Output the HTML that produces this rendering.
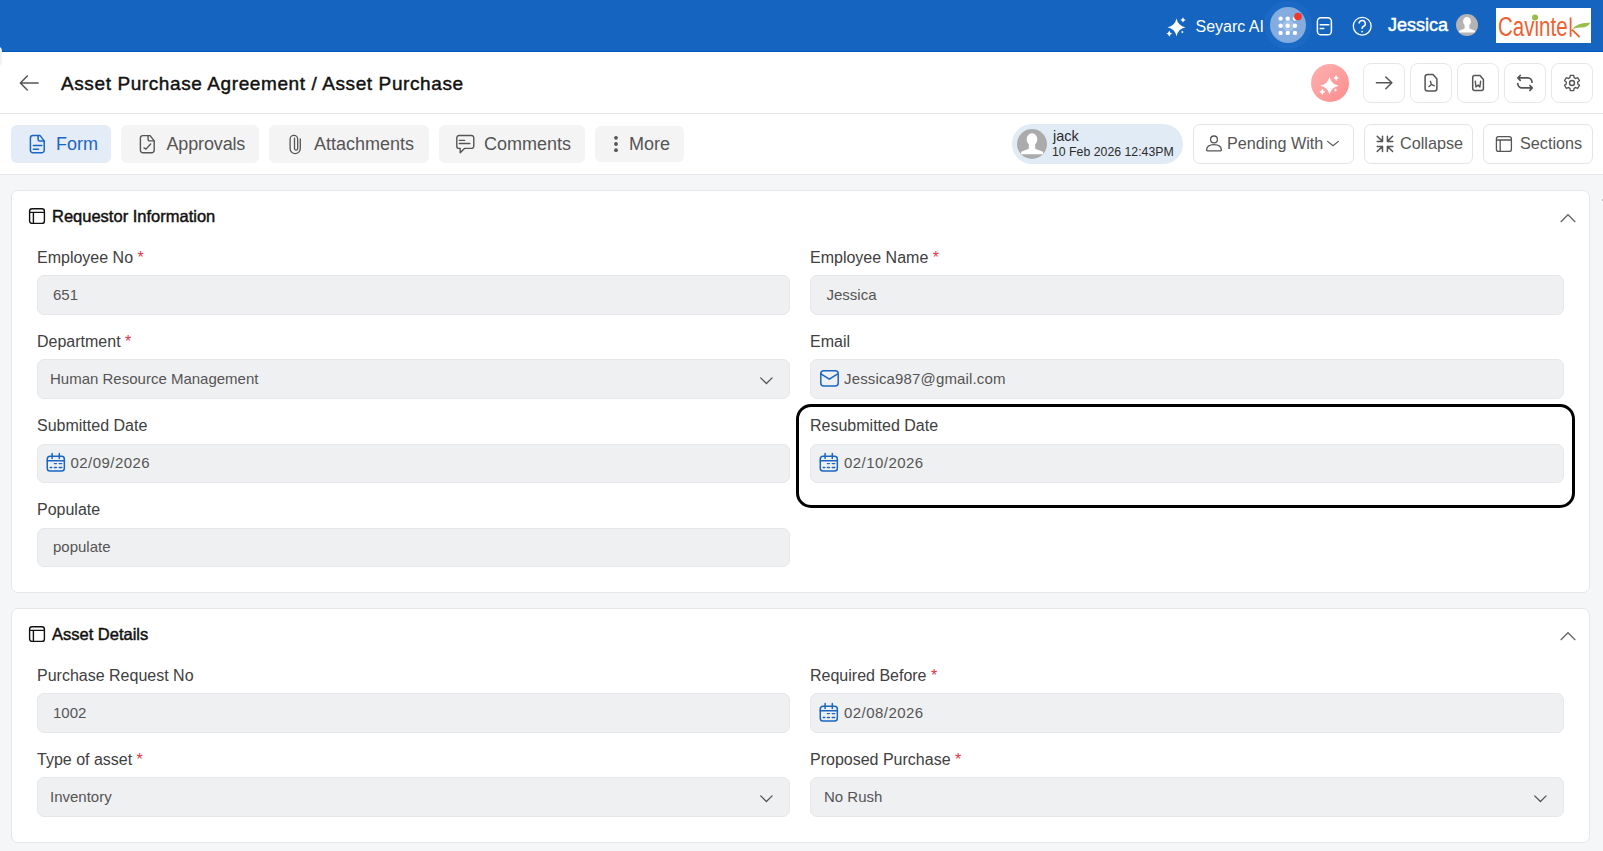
<!DOCTYPE html>
<html><head><meta charset="utf-8">
<style>
*{box-sizing:border-box;margin:0;padding:0}
html,body{width:1603px;height:851px;overflow:hidden;font-family:"Liberation Sans",sans-serif;background:#f5f6f8;position:relative}
.abs{position:absolute}
svg{position:absolute;overflow:visible}
#hdr{left:0;top:0;width:1603px;height:52px;background:#1565c0;border-bottom:1px solid #0357c2}
#titlebar{left:0;top:52px;width:1603px;height:62px;background:#fff;border-bottom:1px solid #e4e6e9}
#tabbar{left:0;top:114px;width:1603px;height:61px;background:#fff;border-bottom:1px solid #e4e6e9}
.t{position:absolute;white-space:nowrap;line-height:1}
.tab{position:absolute;top:125px;height:38px;border-radius:6px;background:#f4f4f5}
.tab.act{background:#e3ecf7}
.tabt{font-size:18px;color:#555;top:135.3px}
.obtn{position:absolute;top:124px;height:39.5px;border:1px solid #e3e4e6;border-radius:7px;background:#fff}
.obt{font-size:16.2px;color:#555;top:134.5px}
.ibtn{position:absolute;top:63px;width:41.5px;height:39.5px;border:1px solid #e6e7e9;border-radius:8px;background:#fff}
.card{position:absolute;left:11px;width:1579px;background:#fff;border:1px solid #e5e7ea;border-radius:7px}
.sech{font-size:16.5px;color:#111;-webkit-text-stroke:0.45px #111;letter-spacing:0}
.lbl{font-size:16px;color:#404040}
.req{color:#e0364a}
.inp{position:absolute;height:39.5px;background:#eff0f2;border:1px solid #e6e7ea;border-radius:7px}
.val{font-size:15px;color:#555;margin-top:-1px}
</style></head><body>
<div id="hdr" class="abs"></div>
<div id="titlebar" class="abs"></div>
<div id="tabbar" class="abs"></div>

<!-- ===== header right ===== -->
<svg style="left:1160px;top:12px" width="30" height="30" viewBox="0 0 30 30">
<path d="M16.5 6.4 Q18 13.6 25.5 15.3 Q18 17 16.5 24.3 Q15 17 7.5 15.3 Q15 13.6 16.5 6.4Z" fill="#fff"/>
<path d="M23 5.3 Q23.5 7.4 25.6 7.9 Q23.5 8.4 23 10.5 Q22.5 8.4 20.4 7.9 Q22.5 7.4 23 5.3Z" fill="#fff"/>
<path d="M9.3 18.4 Q9.9 21 12.5 21.6 Q9.9 22.2 9.3 24.8 Q8.7 22.2 6.1 21.6 Q8.7 21 9.3 18.4Z" fill="#fff"/>
<path d="M22.3 18.6 Q22.5 19.9 23.8 20.1 Q22.5 20.3 22.3 21.6 Q22.1 20.3 20.8 20.1 Q22.1 19.9 22.3 18.6Z" fill="#fff"/>
</svg>
<div class="t" style="left:1195.5px;top:19px;font-size:16px;color:#fff">Seyarc AI</div>
<div class="abs" style="left:1264px;top:1px;width:48px;height:48px;border-radius:50%;background:#1a6ac5"></div>
<div class="abs" style="left:1270px;top:7px;width:36px;height:36px;border-radius:50%;background:#84acdf"></div>
<svg style="left:1262px;top:0px" width="50" height="50" viewBox="0 0 50 50" fill="#fff">
<circle cx="26.3" cy="25.7" r="6" fill="#a2bfe6"/>
<circle cx="18.6" cy="18.6" r="2.2"/><circle cx="25.7" cy="18.6" r="2.2"/><circle cx="32.9" cy="18.6" r="2.2"/>
<circle cx="18.6" cy="25.7" r="2.2"/><circle cx="25.7" cy="25.7" r="2.2"/><circle cx="32.9" cy="25.7" r="2.2"/>
<circle cx="18.6" cy="32.9" r="2.2"/><circle cx="25.7" cy="32.9" r="2.2"/><circle cx="32.9" cy="32.9" r="2.2"/>
<circle cx="36" cy="16.5" r="3.8" fill="#f2362a"/>
</svg>
<svg style="left:1310px;top:12px" width="28" height="28" viewBox="0 0 28 28" fill="none" stroke="#fff" stroke-width="1.5">
<rect x="7.4" y="5.8" width="14" height="17" rx="3.6"/><path d="M10.2 12.8h8.6M10.2 16.4h3.6" stroke-linecap="round"/>
</svg>
<svg style="left:1348px;top:12px" width="28" height="28" viewBox="0 0 28 28" fill="none" stroke="#fff" stroke-width="1.3">
<circle cx="14.2" cy="14.2" r="8.9"/>
<path d="M11.1 11.6a3.1 3.1 0 1 1 4.2 2.9c-.8.4-1.2.9-1.2 1.7v.9" stroke-width="1.5"/>
<circle cx="14.1" cy="19.6" r="0.9" fill="#fff" stroke="none"/>
</svg>
<div class="t" id="jes" style="left:1388px;top:16px;font-size:18px;color:#fff;-webkit-text-stroke:0.45px #fff">Jessica</div>
<svg style="left:1456px;top:14px" width="22" height="22" viewBox="0 0 30 30">
<circle cx="15" cy="15" r="15" fill="#b3b3b3"/>
<g fill="#fff">
<ellipse cx="15" cy="10.2" rx="5.3" ry="6"/>
<rect x="11.8" y="13" width="6.4" height="8"/>
<path d="M4 25.2 L4.3 22.8 Q9 21 12 19.8 H18 Q21 21 25.9 22.8 L26.2 25.2 Z"/>
</g>
</svg>
<div class="abs" style="left:1496px;top:8px;width:95px;height:35px;background:#fff"></div>
<div class="t" style="left:1497.8px;top:13.9px;font-size:27px;color:#ec6230;transform:scaleX(0.76);transform-origin:0 0">Cavinte</div>
<svg style="left:1496px;top:8px" width="95" height="35" viewBox="0 0 95 35">
<circle cx="39" cy="9.4" r="3" fill="#98bd48"/>
<path d="M74.6 9.4V28.8M76 21.6L83.5 29" stroke="#ec6230" stroke-width="1.8" fill="none"/>
<path d="M76.5 21.5 Q81 14 94.5 14.8 Q91.5 19.5 86 19.5 Q80 19 76.5 21.5Z" fill="#9bbe4a"/>
</svg>

<!-- ===== title bar ===== -->
<svg style="left:15px;top:69px" width="28" height="28" viewBox="0 0 28 28" fill="none" stroke="#555" stroke-width="1.5" stroke-linecap="round" stroke-linejoin="round">
<path d="M23.2 14H5.5M12.3 7L5.3 14L12.3 21"/>
</svg>
<div class="t" id="ttl" style="left:61px;top:73.5px;font-size:19px;color:#111;-webkit-text-stroke:0.45px #111;letter-spacing:0.6px">Asset Purchase Agreement / Asset Purchase</div>

<div class="abs" style="left:1311px;top:64px;width:38px;height:38px;border-radius:50%;background:linear-gradient(135deg,#ffb1b1 0%,#fb8d8d 100%)"></div>
<svg style="left:1311px;top:64px" width="38" height="38" viewBox="0 0 38 38" fill="#fff">
<path d="M18.5 12.7 Q20 19.9 27.7 21.7 Q20 23.5 18.5 30.5 Q17 23.5 9.3 21.7 Q17 19.9 18.5 12.7Z"/>
<path d="M25.1 10.9 Q25.7 13.3 28 13.9 Q25.7 14.5 25.1 16.9 Q24.5 14.5 22.2 13.9 Q24.5 13.3 25.1 10.9Z"/>
<path d="M11.3 24.5 Q12 27 14.3 27.7 Q12 28.4 11.3 30.9 Q10.6 28.4 8.3 27.7 Q10.6 27 11.3 24.5Z"/>
<path d="M24.4 24.2 Q24.8 25.6 26.2 26 Q24.8 26.4 24.4 27.8 Q24 26.4 22.6 26 Q24 25.6 24.4 24.2Z"/>
</svg>

<div class="ibtn" style="left:1363px"></div>
<div class="ibtn" style="left:1410px"></div>
<div class="ibtn" style="left:1457px"></div>
<div class="ibtn" style="left:1504px"></div>
<div class="ibtn" style="left:1551px"></div>
<svg style="left:1370px;top:69px" width="28" height="28" viewBox="0 0 28 28" fill="none" stroke="#555" stroke-width="1.5" stroke-linecap="round" stroke-linejoin="round">
<path d="M6.4 13.8H21.9M15.8 8L21.9 13.8L15.8 19.7"/>
</svg>
<svg style="left:1417px;top:69px" width="28" height="28" viewBox="0 0 28 28" fill="none" stroke="#555" stroke-width="1.5" stroke-linecap="round" stroke-linejoin="round">
<path d="M16.1 5.6H10.6A2.5 2.5 0 0 0 8.1 8.1V19.5A2.5 2.5 0 0 0 10.6 22H17.4A2.5 2.5 0 0 0 19.9 19.5V9.9Z"/>
<path d="M14.4 15.4L13.4 12.3M14.4 15.4L12 17.6M14.4 15.4L17.4 16.8" stroke-width="1.4"/>
</svg>
<svg style="left:1464px;top:69px" width="28" height="28" viewBox="0 0 28 28" fill="none" stroke="#555" stroke-width="1.5" stroke-linecap="round" stroke-linejoin="round">
<path d="M16 6.6H10.7A2 2 0 0 0 8.7 8.6V19.4A2 2 0 0 0 10.7 21.4H17.4A2 2 0 0 0 19.4 19.4V10.4Z"/>
<path d="M11.3 12.3L12 18L14.2 16L15.9 18L16.6 12.3" stroke-width="1.4"/>
</svg>
<svg style="left:1511px;top:69px" width="28" height="28" viewBox="0 0 28 28" fill="none" stroke="#555" stroke-width="1.7" stroke-linecap="round" stroke-linejoin="round">
<path d="M7 8.9H16.8A4.3 4.3 0 0 1 21 13.2M9.2 6.5L6.9 8.9L9.2 11.3"/>
<path d="M6.8 14.6A4.3 4.3 0 0 0 11 18.9H21.2M18.9 16.5L21.2 18.9L18.9 21.3"/>
</svg>
<svg style="left:1558px;top:69px" width="28" height="28" viewBox="0 0 28 28" fill="none" stroke="#555" stroke-width="1.35" stroke-linejoin="round">
<path d="M11.98 8.46L12.31 6.38L15.69 6.38L16.02 8.46A3.20 3.20 0 0 0 17.79 9.48L19.75 8.73L21.44 11.65L19.81 12.98A3.20 3.20 0 0 0 19.81 15.02L21.44 16.35L19.75 19.27L17.79 18.52A3.20 3.20 0 0 0 16.02 19.54L15.69 21.62L12.31 21.62L11.98 19.54A3.20 3.20 0 0 0 10.21 18.52L8.25 19.27L6.56 16.35L8.19 15.02A3.20 3.20 0 0 0 8.19 12.98L6.56 11.65L8.25 8.73L10.21 9.48A3.20 3.20 0 0 0 11.98 8.46Z"/>
<circle cx="14" cy="14" r="2.5"/>
</svg>

<!-- ===== tabs ===== -->
<div class="tab act" style="left:11px;width:100px"></div>
<div class="tab" style="left:121px;width:138px"></div>
<div class="tab" style="left:269px;width:160px"></div>
<div class="tab" style="left:439px;width:146px"></div>
<div class="tab" style="left:595px;width:89px;top:126px;height:36px"></div>

<svg style="left:24px;top:130px" width="28" height="28" viewBox="0 0 28 28" fill="none" stroke="#1a66c2" stroke-width="1.5" stroke-linecap="round" stroke-linejoin="round">
<path d="M16.1 5.6H8.9A2.5 2.5 0 0 0 6.4 8.1V20.2A2.5 2.5 0 0 0 8.9 22.7H17.7A2.5 2.5 0 0 0 20.2 20.2V10.9Z"/>
<path d="M14.1 5.6V9.4A1.5 1.5 0 0 0 15.6 10.9H20.2M9.4 15.5H17.8M9.4 19.2H14.5"/>
</svg>
<div class="t tabt" style="left:56px;color:#1a66c2">Form</div>
<svg style="left:134px;top:130px" width="28" height="28" viewBox="0 0 28 28" fill="none" stroke="#555" stroke-width="1.4" stroke-linecap="round" stroke-linejoin="round">
<path d="M16.1 5.6H8.9A2.5 2.5 0 0 0 6.4 8.1V20.2A2.5 2.5 0 0 0 8.9 22.7H17.7A2.5 2.5 0 0 0 20.2 20.2V10.9Z"/>
<path d="M14.1 5.6V9.4A1.5 1.5 0 0 0 15.6 10.9H20.2M10 17.9L12 19.1L16.6 14"/>
</svg>
<div class="t tabt" style="left:166.5px;letter-spacing:-0.15px">Approvals</div>
<svg style="left:280px;top:128px" width="40" height="32" viewBox="0 0 40 32" fill="none" stroke="#555" stroke-width="1.3" stroke-linecap="round">
<path d="M20.3 11V20.5A5.1 5.1 0 0 1 10.1 20.5V11.2A3.8 3.8 0 0 1 17.7 11.2V20.5A1.6 1.6 0 0 1 14.5 20.5V10.2"/>
</svg>
<div class="t tabt" style="left:314px">Attachments</div>
<svg style="left:450px;top:128px" width="40" height="32" viewBox="0 0 40 32" fill="none" stroke="#555" stroke-width="1.4" stroke-linecap="round" stroke-linejoin="round">
<path d="M9 7.5H21.6A2.2 2.2 0 0 1 23.8 9.7V18.2A2.2 2.2 0 0 1 21.6 20.4H14.5L10.2 24.8V20.4H9A2.2 2.2 0 0 1 6.8 18.2V9.7A2.2 2.2 0 0 1 9 7.5Z"/>
<path d="M9.3 12.4H14.6M9.3 15.5H19.8"/>
</svg>
<div class="t tabt" style="left:484px">Comments</div>
<svg style="left:600px;top:128px" width="40" height="32" viewBox="0 0 40 32" fill="#555">
<circle cx="16" cy="9.8" r="1.9"/><circle cx="16" cy="16" r="1.9"/><circle cx="16" cy="22.2" r="1.9"/>
</svg>
<div class="t tabt" style="left:629px">More</div>

<!-- right side of tab bar -->
<div class="abs" style="left:1012px;top:124px;width:171px;height:40px;border-radius:20px;background:#e1ebf6"></div>
<svg style="left:1017px;top:129px" width="30" height="30" viewBox="0 0 30 30">
<circle cx="15" cy="15" r="15" fill="#ababab"/>
<g fill="#fff">
<ellipse cx="15" cy="10.2" rx="5.3" ry="6"/>
<rect x="11.8" y="13" width="6.4" height="8"/>
<path d="M4 25.2 L4.3 22.8 Q9 21 12 19.8 H18 Q21 21 25.9 22.8 L26.2 25.2 Z"/>
</g>
</svg>
<div class="t" style="left:1053px;top:129px;font-size:14.5px;color:#2b2b2b">jack</div>
<div class="t" style="left:1052px;top:145.5px;font-size:12.3px;color:#2b2b2b">10 Feb 2026 12:43PM</div>

<div class="obtn" style="left:1193px;width:161px"></div>
<svg style="left:1200px;top:130px" width="28" height="28" viewBox="0 0 28 28" fill="none" stroke="#555" stroke-width="1.3" stroke-linejoin="round">
<circle cx="14" cy="9.4" r="3.4"/>
<path d="M7.4 20.8H20.6A0.8 0.8 0 0 0 21.4 20Q21.2 14.6 14 14.6Q6.8 14.6 6.6 20A0.8 0.8 0 0 0 7.4 20.8Z"/>
</svg>
<div class="t obt" style="left:1227px">Pending With</div>
<svg style="left:1322px;top:135px" width="20" height="16" viewBox="0 0 20 16" fill="none" stroke="#555" stroke-width="1.2" stroke-linecap="round">
<path d="M5.6 6.4L11 10.8L16.4 6.4"/>
</svg>

<div class="obtn" style="left:1364px;width:108.5px"></div>
<svg style="left:1372px;top:130px" width="28" height="28" viewBox="0 0 28 28" fill="none" stroke="#555" stroke-width="1.5" stroke-linecap="round" stroke-linejoin="round">
<path d="M5.2 6.2L10.5 11.4M10.5 6.2V11.4H5.2M20.6 6.2L15.4 11.4M15.4 6.2V11.4H20.8M5.2 21.5L10.5 16.4M5.2 16.4H10.5V21.5M20.6 21.5L15.4 16.4M20.8 16.4H15.4V21.5"/>
</svg>
<div class="t obt" style="left:1400px">Collapse</div>

<div class="obtn" style="left:1483px;width:109.5px"></div>
<svg style="left:1490px;top:130px" width="28" height="28" viewBox="0 0 28 28" fill="none" stroke="#555" stroke-width="1.3">
<rect x="6.4" y="6.6" width="15" height="14.8" rx="2.2"/><path d="M6.4 10H21.4M10.2 10V21.4"/>
</svg>
<div class="t obt" style="left:1520px">Sections</div>

<!-- ===== card 1 ===== -->
<div class="card" style="top:190px;height:402.5px"></div>
<svg style="left:23px;top:202px" width="28" height="28" viewBox="0 0 28 28" fill="none" stroke="#111" stroke-width="1.4">
<rect x="6.6" y="6.7" width="14.8" height="14.7" rx="2.5"/><path d="M6.6 10.4H21.4M10.4 10.4V21.4"/>
</svg>
<div class="t sech" style="left:52px;top:208px">Requestor Information</div>
<svg style="left:1554px;top:204px" width="28" height="28" viewBox="0 0 28 28" fill="none" stroke="#666" stroke-width="1.3" stroke-linecap="square">
<path d="M7.2 17.5L14 10.7L20.8 17.5"/>
</svg>

<div class="t lbl" style="left:37px;top:250px">Employee No <span class="req">*</span></div>
<div class="inp" style="left:37px;top:275px;width:753px"></div>
<div class="t val" style="left:53px;top:288px">651</div>
<div class="t lbl" style="left:810px;top:250px">Employee Name <span class="req">*</span></div>
<div class="inp" style="left:810px;top:275px;width:754px"></div>
<div class="t val" style="left:826.5px;top:288px">Jessica</div>

<div class="t lbl" style="left:37px;top:334px">Department <span class="req">*</span></div>
<div class="inp" style="left:37px;top:359px;width:753px"></div>
<div class="t val" style="left:50px;top:372px">Human Resource Management</div>
<svg style="left:752px;top:366px" width="28" height="28" viewBox="0 0 28 28" fill="none" stroke="#555" stroke-width="1.3" stroke-linecap="round">
<path d="M8.7 11.9L14.4 17.5L20.1 11.9"/>
</svg>
<div class="t lbl" style="left:810px;top:334px">Email</div>
<div class="inp" style="left:810px;top:359px;width:754px"></div>
<svg style="left:815px;top:364px" width="28" height="28" viewBox="0 0 28 28" fill="none" stroke="#1a66c2" stroke-width="1.5" stroke-linejoin="round">
<rect x="5.8" y="6.8" width="17.4" height="15.2" rx="3"/><path d="M5.9 9.8L14.3 15.2L22.8 9.8"/>
</svg>
<div class="t val" style="left:844px;top:372px;letter-spacing:0.15px">Jessica987@gmail.com</div>

<div class="t lbl" style="left:37px;top:418px">Submitted Date</div>
<div class="inp" style="left:37px;top:444px;width:753px;height:39px"></div>
<svg style="left:41.7px;top:448px" width="28" height="28" viewBox="0 0 28 28" fill="none" stroke="#1a66c2" stroke-width="1.5" stroke-linecap="round">
<rect x="5.25" y="8.35" width="17.1" height="14.7" rx="2.8"/><path d="M5.25 12.8H22.35M10.1 5.6V10.4M17.3 5.6V10.4"/>
<path d="M12.4 15.6H14.4M17.2 15.6H19.8M8.2 19.5H9.8M12.4 19.5H14.4M17.2 19.5H19.8" stroke-width="1.4"/>
</svg>
<div class="t val" style="left:70.5px;top:456px;letter-spacing:0.45px">02/09/2026</div>
<div class="t lbl" style="left:810px;top:418px">Resubmitted Date</div>
<div class="inp" style="left:810px;top:444px;width:754px;height:39px"></div>
<svg style="left:814.7px;top:448px" width="28" height="28" viewBox="0 0 28 28" fill="none" stroke="#1a66c2" stroke-width="1.5" stroke-linecap="round">
<rect x="5.25" y="8.35" width="17.1" height="14.7" rx="2.8"/><path d="M5.25 12.8H22.35M10.1 5.6V10.4M17.3 5.6V10.4"/>
<path d="M12.4 15.6H14.4M17.2 15.6H19.8M8.2 19.5H9.8M12.4 19.5H14.4M17.2 19.5H19.8" stroke-width="1.4"/>
</svg>
<div class="t val" style="left:844px;top:456px;letter-spacing:0.45px">02/10/2026</div>

<div class="t lbl" style="left:37px;top:502px">Populate</div>
<div class="inp" style="left:37px;top:528px;width:753px;height:38.5px"></div>
<div class="t val" style="left:53px;top:540px">populate</div>

<div class="abs" style="left:796px;top:404px;width:779px;height:104px;border:3px solid #000;border-radius:15px"></div>

<!-- ===== card 2 ===== -->
<div class="card" style="top:608px;height:234.5px"></div>
<svg style="left:23px;top:620px" width="28" height="28" viewBox="0 0 28 28" fill="none" stroke="#111" stroke-width="1.4">
<rect x="6.6" y="6.7" width="14.8" height="14.7" rx="2.5"/><path d="M6.6 10.4H21.4M10.4 10.4V21.4"/>
</svg>
<div class="t sech" style="left:52px;top:626px">Asset Details</div>
<svg style="left:1554px;top:622px" width="28" height="28" viewBox="0 0 28 28" fill="none" stroke="#666" stroke-width="1.3" stroke-linecap="square">
<path d="M7.2 17.5L14 10.7L20.8 17.5"/>
</svg>

<div class="t lbl" style="left:37px;top:668px">Purchase Request No</div>
<div class="inp" style="left:37px;top:693px;width:753px"></div>
<div class="t val" style="left:53px;top:706px">1002</div>
<div class="t lbl" style="left:810px;top:668px">Required Before <span class="req">*</span></div>
<div class="inp" style="left:810px;top:693px;width:754px"></div>
<svg style="left:814.7px;top:698px" width="28" height="28" viewBox="0 0 28 28" fill="none" stroke="#1a66c2" stroke-width="1.5" stroke-linecap="round">
<rect x="5.25" y="8.35" width="17.1" height="14.7" rx="2.8"/><path d="M5.25 12.8H22.35M10.1 5.6V10.4M17.3 5.6V10.4"/>
<path d="M12.4 15.6H14.4M17.2 15.6H19.8M8.2 19.5H9.8M12.4 19.5H14.4M17.2 19.5H19.8" stroke-width="1.4"/>
</svg>
<div class="t val" style="left:844px;top:706px;letter-spacing:0.45px">02/08/2026</div>

<div class="t lbl" style="left:37px;top:752px">Type of asset <span class="req">*</span></div>
<div class="inp" style="left:37px;top:777px;width:753px"></div>
<div class="t val" style="left:50px;top:790px">Inventory</div>
<svg style="left:752px;top:784px" width="28" height="28" viewBox="0 0 28 28" fill="none" stroke="#555" stroke-width="1.3" stroke-linecap="round">
<path d="M8.7 11.9L14.4 17.5L20.1 11.9"/>
</svg>
<div class="t lbl" style="left:810px;top:752px">Proposed Purchase <span class="req">*</span></div>
<div class="inp" style="left:810px;top:777px;width:754px"></div>
<div class="t val" style="left:824px;top:790px">No Rush</div>
<svg style="left:1526px;top:784px" width="28" height="28" viewBox="0 0 28 28" fill="none" stroke="#555" stroke-width="1.3" stroke-linecap="round">
<path d="M8.7 11.9L14.4 17.5L20.1 11.9"/>
</svg>

<div class="abs" style="left:-8px;top:46px;width:10px;height:21px;border-radius:5px;background:#f1f2f4"></div>
<div class="abs" style="left:1601.5px;top:199px;width:1.5px;height:1.5px;background:#bbb"></div>
</body></html>
